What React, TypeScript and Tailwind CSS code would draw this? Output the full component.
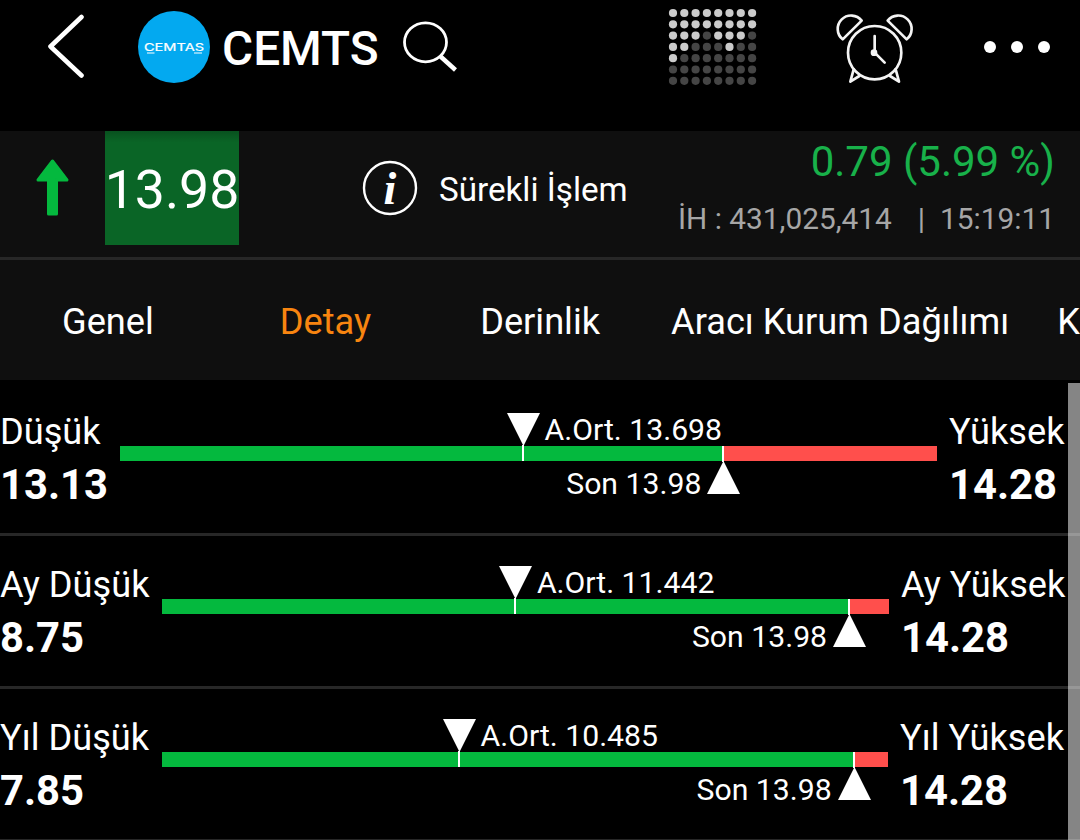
import clsx from "clsx"

type RangeRowProps = {
    lowLabel: string
    highLabel: string
    low: number
    high: number
    average: number
    last: number
    lowClass: string
    highClass: string
}

const ranges: RangeRowProps[] = [
    { lowLabel: 'Düşük', highLabel: 'Yüksek', low: 13.13, high: 14.28, average: 13.698, last: 13.98, lowClass: 'w-[120px]', highClass: 'w-[131px]' },
    { lowLabel: 'Ay Düşük', highLabel: 'Ay Yüksek', low: 8.75, high: 14.28, average: 11.442, last: 13.98, lowClass: 'w-[162px]', highClass: 'w-[179px]' },
    { lowLabel: 'Yıl Düşük', highLabel: 'Yıl Yüksek', low: 7.85, high: 14.28, average: 10.485, last: 13.98, lowClass: 'w-[162px]', highClass: 'w-[180px]' }
]

const tabs = [
    { title: 'Genel', className: 'ml-[62px]' },
    { title: 'Detay', className: 'ml-[126px]', isActive: true },
    { title: 'Derinlik', className: 'ml-[109px]' },
    { title: 'Aracı Kurum Dağılımı', className: 'ml-[71px]' },
    { title: 'K', className: 'ml-[48px]' }
]

// how many dots are lit, row by row
const dots = [
    '11111111',
    '11111111',
    '11101110',
    '11000100',
    '10000000',
    '00000000',
    '00000000'
]

const Logo = () => (
    <svg className="ml-[54px] mt-[11px] shrink-0" width="72" height="72" viewBox="0 0 72 72">
        <circle cx="36" cy="36" r="36" fill="#03a9f0" />
        <text x="6" y="40" fill="#fff" stroke="#fff" strokeWidth="0.2" fontFamily="Inter, sans-serif" fontSize="10.5" textLength="60" lengthAdjust="spacingAndGlyphs">CEMTAS</text>
        <path d="M9 42h7.5M56 42h8" stroke="#fff" strokeWidth="1.2" />
    </svg>
)

const DotGrid = () => (
    <svg className="ml-[210px] mt-[8px] shrink-0" width="90" height="78" viewBox="0 0 90 78">
        {dots.map((row, y) => row.split('').map((dot, x) => (
            <circle key={`${x}-${y}`} cx={5 + x * 11.3} cy={5 + y * 11.3} r="4.1" fill={dot === '1' ? '#cbcbcb' : '#454545'} />
        )))}
    </svg>
)

const AlarmIcon = () => (
    <svg className="ml-[77px] mt-[12px] shrink-0" width="80" height="72" viewBox="45 36 240 216" fill="none" stroke="#f4f4f4" strokeWidth="8" strokeLinejoin="round" strokeLinecap="round">
        <circle cx="164" cy="158" r="80" />
        <path d="M125 62A40.2 40.2 0 1 0 68 118Z" />
        <path d="M203 62A40.2 40.2 0 1 1 260 118Z" />
        <path d="M101 208L91 245L118 228" />
        <path d="M227 208L237 245L210 228" />
        <path d="M164 108V158L194 188" />
        <circle cx="162" cy="158" r="6" fill="#f4f4f4" />
    </svg>
)

const Header = () => (
    <header className="flex h-[131px] items-start">
        <svg className="ml-[46px] mt-[12px] shrink-0" width="38" height="68" viewBox="0 0 38 68" fill="none" stroke="#fff" strokeWidth="4.6" strokeLinecap="round" strokeLinejoin="round">
            <path d="M35.5 5L4.5 34.5L35.5 63.5" />
        </svg>
        <Logo />
        <h1 className="ml-[12px] mt-[20px] w-[158px] text-[47.7px] leading-[58px] font-medium">CEMTS</h1>
        <svg className="ml-[22px] mt-[20px] shrink-0" width="56" height="54" viewBox="0 0 56 54" fill="none" stroke="#fff">
            <ellipse cx="23.5" cy="22.3" rx="21" ry="19.5" strokeWidth="2.8" />
            <path d="M38 36L53.5 50" strokeWidth="4.4" />
        </svg>
        <DotGrid />
        <AlarmIcon />
        <div className="ml-[69px] mt-[41px] flex gap-[15px]">
            <span className="size-[12px] rounded-full bg-white" />
            <span className="size-[12px] rounded-full bg-white" />
            <span className="size-[12px] rounded-full bg-white" />
        </div>
    </header>
)

const PriceBar = () => (
    <section className="flex h-[129px] items-start border-b-[3px] border-[#272727] bg-[#0f0f0f]">
        <svg className="ml-[35px] mt-[27px] shrink-0" width="35" height="59" viewBox="0 0 35 59">
            <path d="M17.5 3L32 22H21.5V56H13.5V22H3Z" fill="#04b93e" stroke="#04b93e" strokeWidth="3" strokeLinejoin="round" />
        </svg>
        <div className="ml-[35px] flex h-[114px] w-[134px] items-center justify-center bg-[#0a6526] bg-linear-to-b from-black/20 to-transparent to-10% pt-[4px] text-[53.6px]">13.98</div>
        <svg className="ml-[123px] mt-[29px] shrink-0" width="56" height="56" viewBox="0 0 56 56">
            <circle cx="28" cy="28" r="26" fill="none" stroke="#fff" strokeWidth="2.4" />
            <text x="28" y="44" textAnchor="middle" fill="#fff" fontFamily="Liberation Serif, serif" fontSize="46" fontWeight="700" fontStyle="italic">i</text>
        </svg>
        <div className="ml-[21px] mt-[38px] whitespace-nowrap text-[33.2px] leading-[41px]">Sürekli İşlem</div>
        <div className="ml-auto mr-[25px] flex flex-col items-end whitespace-pre">
            <div className="mt-[6px] text-[42px] leading-[50px] text-[#18b14a]">0.79 (5.99 %)</div>
            <div className="mt-[14px] text-[29.8px] leading-[36px] text-[#a6a6a6]">İH : 431,025,414<span className="ml-[26px] mr-[15px]">|</span>15:19:11</div>
        </div>
    </section>
)

const Tabs = () => (
    <nav className="flex h-[120px] items-center overflow-hidden bg-[#0f0f0f] pt-[4px] whitespace-nowrap text-[36.2px]">
        {tabs.map((tab) => (
            <a key={tab.title} className={clsx('shrink-0', tab.className, tab.isActive && 'text-[#f88510]')}>{tab.title}</a>
        ))}
    </nav>
)

const RangeRow = ({ lowLabel, highLabel, low, high, average, last, lowClass, highClass }: RangeRowProps) => {

    const percent = (value: number) => `${((value - low) / (high - low)) * 100}%`

    return (
        <div className="flex h-[153px] border-b-[3px] border-[#272727] pr-[12px]">
            <div className={clsx('shrink-0 whitespace-nowrap pt-[24px]', lowClass)}>
                <div className="text-[36.2px] leading-[50px]">{lowLabel}</div>
                <div className="text-[41.8px] leading-[56px] font-bold">{low.toFixed(2)}</div>
            </div>
            <div className="relative mt-[63px] h-[15px] grow bg-[#ff4f4c]">
                <div className="h-full bg-[#04b93e]" style={{ width: percent(last) }} />
                <div className="absolute -top-[33px] -ml-[17px] flex h-[48px] items-start" style={{ left: percent(average) }}>
                    <svg width="33" height="48" viewBox="0 0 33 48" fill="#fff">
                        <path d="M0 0H33L16.5 33Z" />
                        <path d="M15 32H17V48H15Z" />
                    </svg>
                    <span className="ml-[5px] whitespace-nowrap text-[30.2px] leading-[34px]">A.Ort. {average}</span>
                </div>
                <div className="absolute top-0 -mr-[16.5px] flex h-[48px] items-end" style={{ right: `calc(100% - ${percent(last)})` }}>
                    <span className="mr-[6px] whitespace-nowrap text-[30.2px] leading-[21px]">Son {last}</span>
                    <svg width="33" height="48" viewBox="0 0 33 48" fill="#fff">
                        <path d="M0 48H33L16.5 15Z" />
                        <path d="M15 0H17V16H15Z" />
                    </svg>
                </div>
            </div>
            <div className={clsx('shrink-0 whitespace-nowrap pl-[12px] pt-[24px]', highClass)}>
                <div className="text-[36.2px] leading-[50px]">{highLabel}</div>
                <div className="text-[41.8px] leading-[56px] font-bold">{high.toFixed(2)}</div>
            </div>
        </div>
    )
}

const App = () => {
    return (
        <div className="h-[840px] w-[1080px] overflow-hidden bg-black font-['Roboto',sans-serif] text-white">
            <Header />
            <PriceBar />
            <Tabs />
            <main className="relative h-[460px] overflow-hidden pt-[3px]">
                {ranges.map((range) => <RangeRow key={range.lowLabel} {...range} />)}
                <div className="absolute right-0 top-[3px] h-[457px] w-[12px] bg-white/52" />
            </main>
        </div>
    )
}

export default App
